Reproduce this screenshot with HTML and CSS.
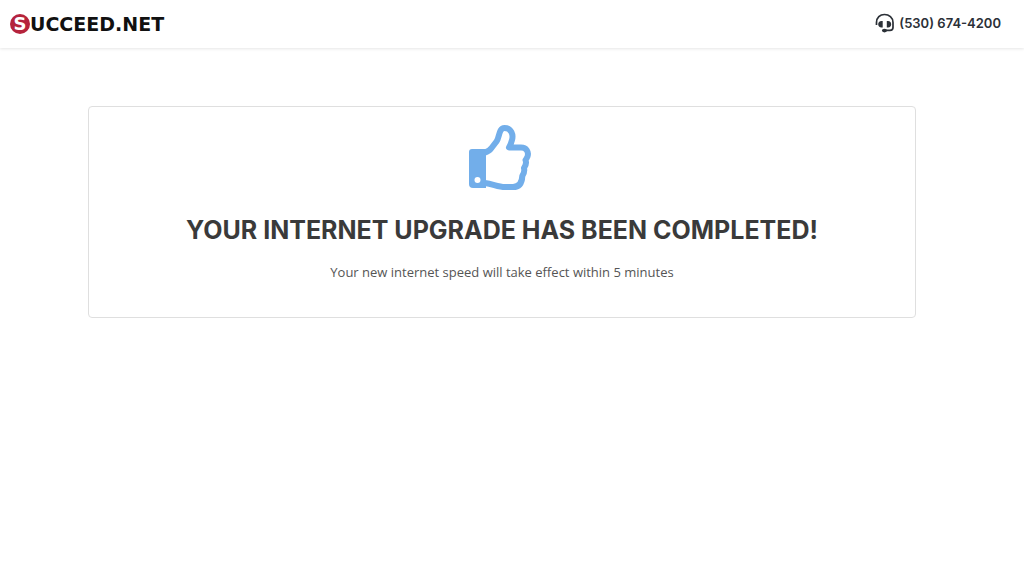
FILE: index.html
```
<!DOCTYPE html>
<html lang="en">
<head>
<meta charset="UTF-8">
<meta name="viewport" content="width=device-width, initial-scale=1.0">
<title>Succeed.net</title>
<link rel="stylesheet" href="styles.css">
</head>
<body>
    <header class="site-header">
        <a class="logo" href="#">
            <span class="logo-badge">S</span><span class="logo-name">UCCEED.NET</span>
        </a>
        <a class="phone" href="tel:5306744200">
            <svg class="headset" viewBox="0 0 20 20" aria-hidden="true">
                <path d="M1.5 12V9.5C1.5 4.5 5 1.5 9.5 1.5S18 4.5 18 9.5V14.5Q18 17.3 15 17.3H10" fill="none" stroke="#2b3037" stroke-width="1.7"/>
                <path d="M7.7 8v6.6H6.5Q3.2 14.2 3.2 11.3T6.5 8zM11.8 8v6.6H13Q16.2 14.2 16.2 11.3T13 8z" fill="#2b3037"/>
                <ellipse cx="9.5" cy="17.6" rx="2.6" ry="1.8" fill="#2b3037"/>
            </svg>
            <span>(530) 674-4200</span>
        </a>
    </header>

    <main class="content">
        <section class="card">
            <svg class="thumb" viewBox="14 10 66 66" aria-hidden="true">
                <path d="M17 34H31V73H18Q14 73 14 69V37Q14 34 17 34z" fill="#72aeea"/>
                <path d="M30 37.5Q34 36.5 36.5 33L41.5 26.5C44.5 23 43.5 13 49.5 13C56.5 13 58.5 20 57 25Q56 29 54 32.5H66C71.5 32.5 74 37 72.5 41.5Q71.5 44 70.5 45Q72 49 69 53Q70 57 67.3 61C67 68 64 72 58 72H50C43 72 38 69 30 68" fill="none" stroke="#72aeea" stroke-width="6" stroke-linejoin="round"/>
                <circle cx="22.5" cy="65" r="3" fill="#fff"/>
            </svg>
            <h1>YOUR INTERNET UPGRADE HAS BEEN COMPLETED!</h1>
            <p>Your new internet speed will take effect within 5 minutes</p>
        </section>
    </main>
</body>
</html>
```
FILE: styles.css
```
* {
    box-sizing: border-box;
}

body {
    margin: 0;
    background-color: #fff;
    color: #3a3a3a;
    font-family: "Open Sans", sans-serif;
}

.site-header {
    display: flex;
    justify-content: space-between;
    align-items: center;
    height: 48px;
    padding: 0 23px 0 10px;
    box-shadow: 0 1px 3px rgba(0, 0, 0, 0.1);
}

.logo,
.phone {
    display: flex;
    align-items: center;
    text-decoration: none;
}

.logo {
    color: #111;
    font-family: "DejaVu Sans", sans-serif;
    font-weight: bold;
}

.logo-badge {
    width: 20px;
    height: 20px;
    border-radius: 50%;
    background-color: #b5233c;
    color: #fff;
    font-size: 18px;
    line-height: 20px;
    text-align: center;
}

.logo-name {
    font-size: 19px;
    line-height: 20px;
}

.phone {
    gap: 4px;
    padding-bottom: 2px;
    color: #2b3037;
    font-family: Inter, sans-serif;
    font-size: 13px;
    font-weight: 600;
    line-height: 20px;
}

.headset {
    width: 20px;
    height: 20px;
}

.content {
    padding: 58px 108px 58px 88px;
}

.card {
    padding: 18px 16px 34px;
    border: 1px solid #dfdfdf;
    border-radius: 4px;
    text-align: center;
}

.thumb {
    display: block;
    width: 66px;
    height: 66px;
    margin: 0 auto;
}

h1 {
    margin: 20px 0 12px;
    color: #3a3a3a;
    font-family: Inter, sans-serif;
    font-size: 25px;
    font-weight: 700;
    line-height: 38px;
}

p {
    margin: 0;
    color: #555;
    font-size: 13px;
    line-height: 22px;
}
```
